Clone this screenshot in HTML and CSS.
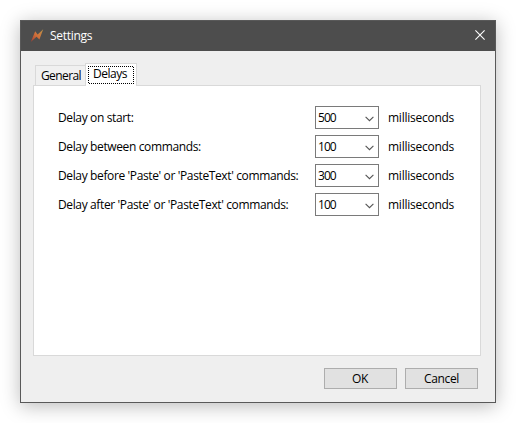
FILE: index.html
```html
<!DOCTYPE html>
<html lang="en">
<head>
<meta charset="utf-8">
<title>Settings</title>
<link rel="stylesheet" href="styles.css">
</head>
<body>
<main class="window">
  <header class="titlebar">
    <svg class="app-icon" width="14" height="14" viewBox="0 0 14 14">
      <defs><linearGradient id="bolt" x1="0" y1="1" x2="1" y2="0"><stop offset="0" stop-color="#a03c32"/><stop offset=".5" stop-color="#d0703a"/><stop offset="1" stop-color="#b8954a"/></linearGradient></defs>
      <path d="M.8 12.9 5.2 2.2 7.6 5.4 13.2.2 9.4 10.4 6.5 7.8Z" fill="url(#bolt)"/>
    </svg>
    <span class="title">Settings</span>
    <svg class="close" width="10" height="10" viewBox="0 0 10 10"><path d="M.4.4 9.6 9.6M9.6.4.4 9.6" stroke="#fff" stroke-width="1.1"/></svg>
  </header>
  <nav class="tabs">
    <div class="tab"><span class="tab-label">General</span></div>
    <div class="tab active"><svg class="focus" width="46" height="18"><path d="M0 .5H46M1 17.5H46M.5 0V18M45.5 1V18"/></svg><span class="tab-label">Delays</span></div>
  </nav>
  <section class="pane">
    <div class="row"><span class="label">Delay on start:</span><div class="combo"><span>500</span><svg width="9" height="6" viewBox="0 0 9 6"><path d="M.6.8 4.5 4.7 8.4.8"/></svg></div><span class="unit">milliseconds</span></div>
    <div class="row"><span class="label">Delay between commands:</span><div class="combo"><span>100</span><svg width="9" height="6" viewBox="0 0 9 6"><path d="M.6.8 4.5 4.7 8.4.8"/></svg></div><span class="unit">milliseconds</span></div>
    <div class="row"><span class="label">Delay before 'Paste' or 'PasteText' commands:</span><div class="combo"><span>300</span><svg width="9" height="6" viewBox="0 0 9 6"><path d="M.6.8 4.5 4.7 8.4.8"/></svg></div><span class="unit">milliseconds</span></div>
    <div class="row"><span class="label">Delay after 'Paste' or 'PasteText' commands:</span><div class="combo"><span>100</span><svg width="9" height="6" viewBox="0 0 9 6"><path d="M.6.8 4.5 4.7 8.4.8"/></svg></div><span class="unit">milliseconds</span></div>
  </section>
  <footer class="actions">
    <div class="button ok">OK</div>
    <div class="button">Cancel</div>
  </footer>
</main>
</body>
</html>
```
FILE: styles.css
```css
* { box-sizing: border-box; }
body {
  margin: 0;
  padding: 20px;
  background: #fff;
  color: #000;
  font: 12px/16px "Open Sans", "Noto Sans", sans-serif;
  letter-spacing: -0.25px;
  white-space: nowrap;
  overflow: hidden;
}
.window {
  width: 476px;
  height: 383px;
  border: 1px solid #595959;
  background: #efefef;
  box-shadow: 0 3px 18px rgba(0, 0, 0, .27);
}
.titlebar {
  display: flex;
  align-items: center;
  height: 30px;
  padding: 0 10px 0 9px;
  background: #4d4d4d;
  color: #fff;
}
.title { margin-left: 6px; flex: 1; letter-spacing: -0.3px; }
.close { margin-top: -2px; }
.tabs {
  display: flex;
  align-items: flex-end;
  height: 35px;
  padding-left: 14px;
}
.tab {
  position: relative;
  width: 50px;
  height: 20px;
  margin-bottom: 1px;
  padding: 2px 0 0 5px;
  background: #f0f0f0;
  border: 1px solid #d9d9d9;
  border-width: 1px 0 0 1px;
  letter-spacing: -0.6px;
}
.tab.active {
  z-index: 1;
  width: 52px;
  height: 23px;
  margin-bottom: 0;
  padding: 2px 0 0 7px;
  border-width: 1px 1px 0 1px;
  background: #fff;
  letter-spacing: -0.5px;
}
.focus { position: absolute; left: 2px; top: 2px; }
.focus path { fill: none; stroke: #000; stroke-dasharray: 1 1; }
.pane {
  display: flex;
  flex-direction: column;
  gap: 6px;
  width: 448px;
  height: 271px;
  margin: -1px 0 0 12px;
  padding: 20px 0 0 24px;
  border: 1px solid #d9d9d9;
  background: #fff;
}
.row { display: flex; align-items: center; height: 23px; }
.label { width: 257px; letter-spacing: -0.37px; }
.combo {
  display: flex;
  align-items: center;
  justify-content: space-between;
  width: 64px;
  height: 23px;
  padding: 0 4px 0 2px;
  border: 1px solid #7a7a7a;
  letter-spacing: -0.95px;
}
.combo svg { margin-top: 2px; fill: none; stroke: #555; stroke-width: 1.1; }
.unit { margin-left: 9px; }
.actions {
  display: flex;
  justify-content: flex-end;
  gap: 8px;
  padding: 12px 17px 0 0;
}
.button {
  width: 73px;
  height: 21px;
  border: 1px solid #adadad;
  background: #e1e1e1;
  line-height: 19px;
  text-align: center;
  letter-spacing: -0.35px;
}
.button.ok { padding-right: 1px; }
```
